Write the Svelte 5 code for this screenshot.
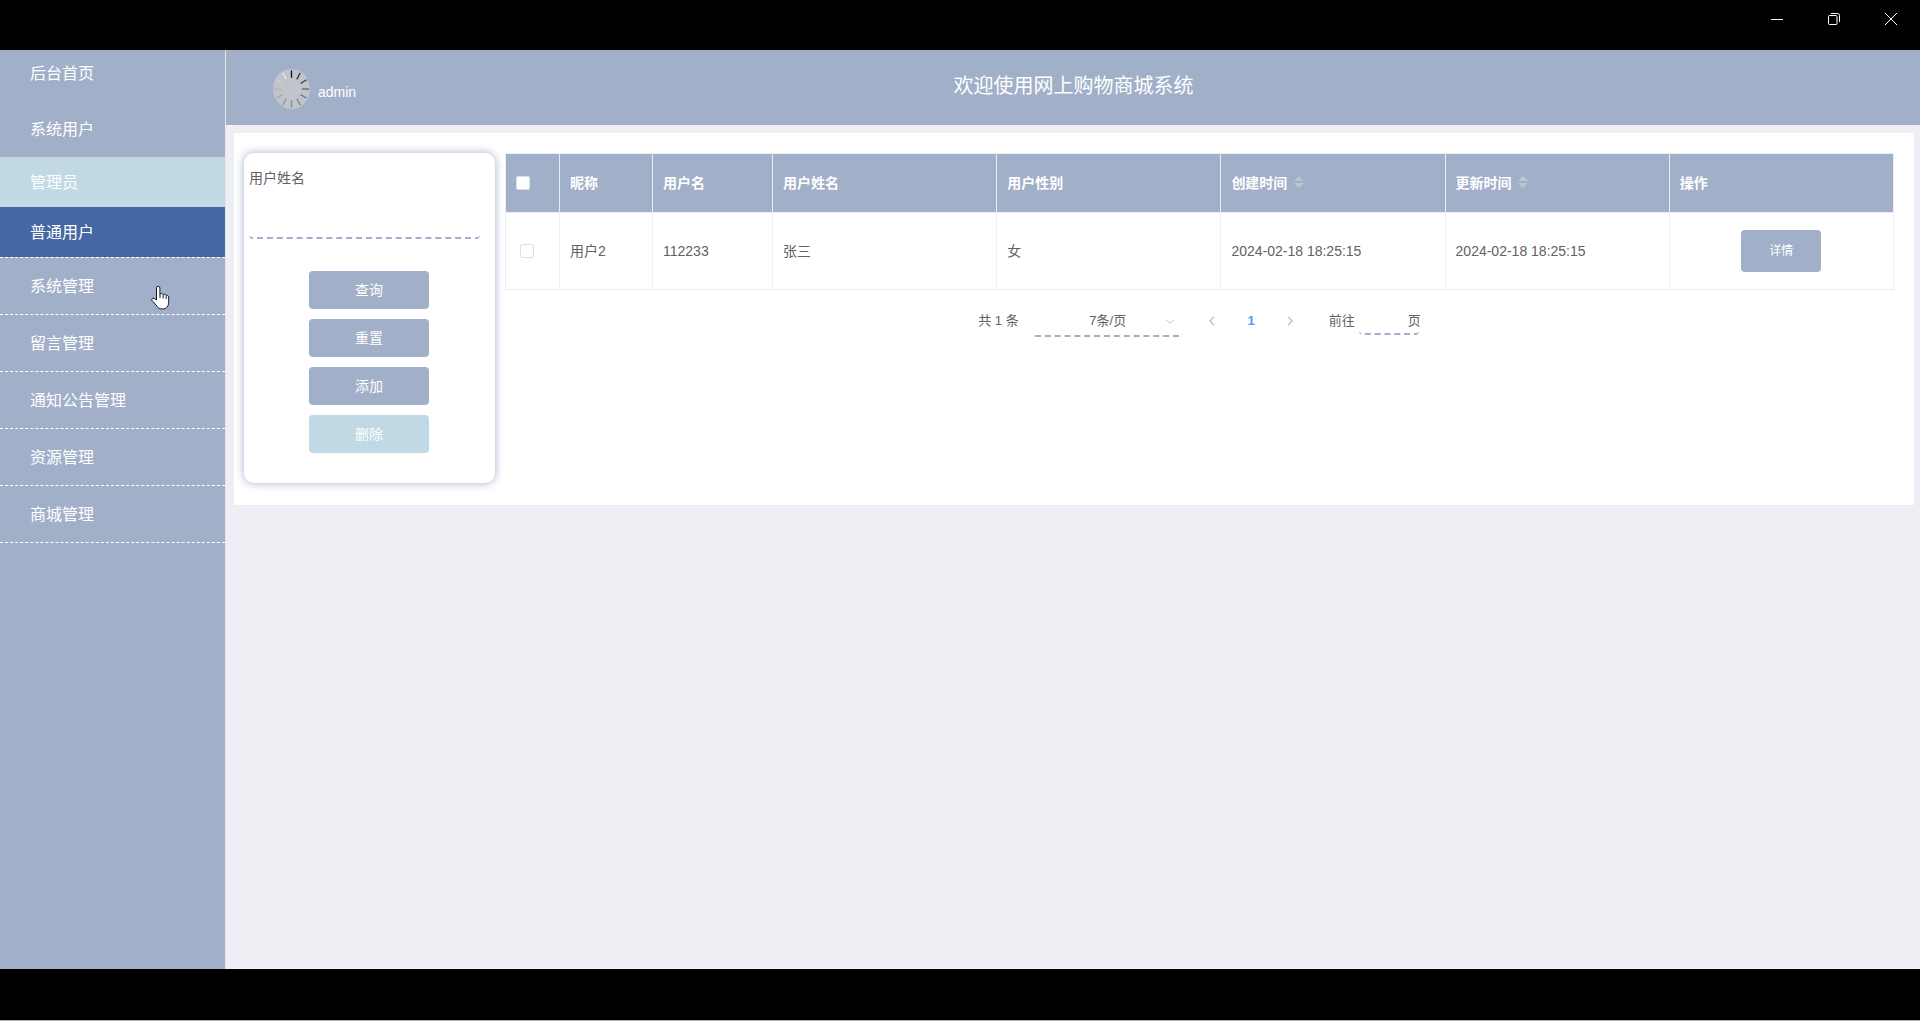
<script lang="ts">
	interface MenuItem {
		label: string;
		kind: 'home' | 'plain' | 'sub' | 'group';
		state?: 'hover' | 'active';
	}

	const menu: MenuItem[] = [
		{ label: '后台首页', kind: 'home' },
		{ label: '系统用户', kind: 'plain' },
		{ label: '管理员', kind: 'sub', state: 'hover' },
		{ label: '普通用户', kind: 'sub', state: 'active' },
		{ label: '系统管理', kind: 'group' },
		{ label: '留言管理', kind: 'group' },
		{ label: '通知公告管理', kind: 'group' },
		{ label: '资源管理', kind: 'group' },
		{ label: '商城管理', kind: 'group' }
	];

	const columns = [
		{ label: '昵称' },
		{ label: '用户名' },
		{ label: '用户姓名' },
		{ label: '用户性别' },
		{ label: '创建时间', sortable: true },
		{ label: '更新时间', sortable: true },
		{ label: '操作' }
	];

	const rows = [
		{
			id: 2,
			nickname: '用户2',
			username: '112233',
			name: '张三',
			gender: '女',
			created: '2024-02-18 18:25:15',
			updated: '2024-02-18 18:25:15'
		}
	];

	// spinner spokes, darkest at twelve o'clock and fading clockwise
	const spokes = [
		'#111', '#333', '#444', '#666', '#777', '#858585',
		'#8a8a8a', '#999', '#a5a5a5', '#b5b5b5', '#d2d2d2', '#e6e6e6'
	];

	let name = $state('');
	let page = $state('');
	let pageSize = $state('7');
	let selected = $state<number[]>([]);

	const allSelected = $derived(selected.length === rows.length);

	function toggleAll() {
		selected = allSelected ? [] : rows.map((r) => r.id);
	}

	function reset() {
		name = '';
	}
</script>

<div class="window">
	<div class="titlebar">
		<button aria-label="最小化">
			<svg width="12" height="12" viewBox="0 0 12 12"><path d="M0 6.5h12" /></svg>
		</button>
		<button aria-label="还原">
			<svg width="12" height="12" viewBox="0 0 12 12">
				<rect x="0.5" y="2.5" width="8.5" height="9" rx="1" />
				<path d="M3 .5h6.5a2 2 0 0 1 2 2V9" />
			</svg>
		</button>
		<button aria-label="关闭">
			<svg width="12" height="12" viewBox="0 0 12 12"><path d="M0 0l12 12M12 0L0 12" /></svg>
		</button>
	</div>

	<div class="app">
		<nav class="sidebar">
			{#each menu as item (item.label)}
				<a href="#{item.label}" class={[item.kind, item.state]}>{item.label}</a>
			{/each}
		</nav>

		<div class="content">
			<header>
				<div class="user">
					<svg class="avatar" width="37" height="40" viewBox="0 0 37 40">
						<ellipse cx="18.5" cy="20" rx="18.5" ry="20" fill="#bfc4cd" />
						{#each spokes as color, i (i)}
							<path
								d="M0 -17.5V-10.5"
								stroke={color}
								stroke-width="1.3"
								transform="translate(18.5 20) scale(1 1.06) rotate({i * 30})"
							/>
						{/each}
					</svg>
					<span>admin</span>
				</div>
				<h1>欢迎使用网上购物商城系统</h1>
			</header>

			<main>
				<form class="search" onsubmit={(e) => e.preventDefault()}>
					<label for="name">用户姓名</label>
					<input id="name" type="text" bind:value={name} />
					<button class="btn">查询</button>
					<button class="btn" type="button" onclick={reset}>重置</button>
					<button class="btn" type="button">添加</button>
					<button class="btn light" type="button" disabled={!selected.length}>删除</button>
				</form>

				<section>
					<table>
						<colgroup>
							<col class="w-check" />
							<col class="w-nick" />
							<col class="w-user" />
							<col span="5" />
						</colgroup>
						<thead>
							<tr>
								<th>
									<input type="checkbox" aria-label="全选" checked={allSelected} onchange={toggleAll} />
								</th>
								{#each columns as col (col.label)}
									<th>
										{col.label}
										{#if col.sortable}
											<svg class="sort" width="10" height="12" viewBox="0 0 10 12">
												<path d="M0 5l5-5 5 5zM0 7l5 5 5-5z" />
											</svg>
										{/if}
									</th>
								{/each}
							</tr>
						</thead>
						<tbody>
							{#each rows as row (row.id)}
								<tr>
									<td class="check">
										<input type="checkbox" aria-label={row.nickname} value={row.id} bind:group={selected} />
									</td>
									<td>{row.nickname}</td>
									<td>{row.username}</td>
									<td>{row.name}</td>
									<td>{row.gender}</td>
									<td>{row.created}</td>
									<td>{row.updated}</td>
									<td class="actions"><button class="btn small">详情</button></td>
								</tr>
							{/each}
						</tbody>
					</table>

					<div class="pagination">
						<span>共 {rows.length} 条</span>
						<div class="size">
							<select aria-label="每页条数" bind:value={pageSize}>
								<option value="7">7条/页</option>
								<option value="10">10条/页</option>
								<option value="20">20条/页</option>
							</select>
							<svg width="10" height="6" viewBox="0 0 10 6"><path d="M1 .5l4 4 4-4" /></svg>
						</div>
						<button class="pager" aria-label="上一页" disabled>
							<svg width="6" height="10" viewBox="0 0 6 10"><path d="M5 .7L1 5l4 4.3" /></svg>
						</button>
						<button class="pager current">1</button>
						<button class="pager" aria-label="下一页" disabled>
							<svg width="6" height="10" viewBox="0 0 6 10"><path d="M1 .7L5 5 1 9.3" /></svg>
						</button>
						<label class="jump">前往 <input type="text" bind:value={page} /> 页</label>
					</div>
				</section>
			</main>
		</div>
	</div>

	<div class="taskbar"></div>

	<svg class="cursor" width="20" height="26" viewBox="0 0 20 26">
		<path
			d="M6.5 15V3a1.7 1.7 0 0 1 3.4 0v6.2c.4-1.1 2.9-1 3.2.5.6-.8 2.8-.6 3 .9.9-.7 2.6-.2 2.6 1.5V17c0 4-2 7-6.2 7-3.5 0-5-1.5-6.5-4L2 15.5c-1-1.5.8-3 2.2-2z"
		/>
		<path class="fold" d="M10 9v4M13.2 10v3.5M16.2 11v3" />
	</svg>
</div>

<style>
	:global(body) {
		margin: 0;
		background: #000;
	}

	.window {
		position: relative;
		display: flex;
		flex-direction: column;
		min-height: 100vh;
		font: 14px/20px 'Liberation Sans', 'Noto Sans CJK SC', sans-serif;
		color: #606266;
	}

	.window :global(*) {
		box-sizing: border-box;
	}

	button,
	input,
	select {
		font: inherit;
		color: inherit;
		margin: 0;
	}

	button {
		padding: 0;
		border: 0;
		background: none;
		cursor: pointer;
	}

	svg {
		fill: none;
	}

	.titlebar {
		display: flex;
		justify-content: flex-end;
		height: 50px;
		padding-right: 1px;
		background: #000;
	}

	.titlebar button {
		display: grid;
		place-items: center;
		width: 57px;
		height: 38px;
	}

	.titlebar svg {
		stroke: #fff;
	}

	.app {
		display: flex;
		flex: 1;
		background: #eeeef4;
	}

	.sidebar {
		flex: none;
		width: 226px;
		background: #a2afc9;
		border-right: 1px solid #e6e6e6;
	}

	.sidebar a {
		display: block;
		padding: 2px 0 0 30px;
		font-size: 16px;
		line-height: 54px;
		color: #fff;
		text-decoration: none;
	}

	.sidebar .home {
		padding-bottom: 5px;
		line-height: 44px;
	}

	.sidebar .sub {
		line-height: 48px;
	}

	.sidebar .hover {
		background: #c0d9e4;
	}

	.sidebar .active {
		background: #4468a1;
	}

	.sidebar .group {
		border-bottom: 1px dashed #fff;
	}

	.sidebar .active + .group {
		border-top: 1px dashed #fff;
	}

	.content {
		flex: 1;
		min-width: 0;
	}

	header {
		display: grid;
		grid-template-columns: 1fr auto 1fr;
		height: 75px;
		padding: 2px 46px 0 47px;
		background: #a2afc9;
		color: #fff;
	}

	.user {
		display: flex;
		align-items: center;
		gap: 8px;
	}

	.user span {
		padding-top: 6px;
	}

	h1 {
		margin: 0;
		font-size: 20px;
		font-weight: 400;
		line-height: 68px;
	}

	main {
		display: flex;
		align-items: flex-start;
		gap: 10px;
		margin: 8px 6px 0 8px;
		padding: 20px 20px 22px 10px;
		background: #fff;
	}

	.search {
		display: flex;
		flex: none;
		flex-direction: column;
		align-items: center;
		gap: 10px;
		width: 251px;
		padding: 5px 6px 30px 5px;
		border-radius: 10px;
		box-shadow: 0 0 10px #a2afc9;
	}

	.search label {
		align-self: flex-start;
		line-height: 40px;
	}

	.search input {
		align-self: flex-start;
		width: 231px;
		height: 36px;
		margin: -5px 0 22px;
		padding: 0 15px;
		border: 0 dashed #a2afc9;
		border-bottom-width: 2px;
		border-radius: 4px;
		background: none;
		outline: 0;
	}

	.btn {
		width: 120px;
		height: 38px;
		border-radius: 4px;
		background: #a2afc9;
		color: #fff;
	}

	.btn.light {
		background: #c0d9e4;
	}

	.btn.small {
		width: 80px;
		height: 42px;
		font-size: 12px;
	}

	section {
		flex: 1;
		min-width: 0;
	}

	table {
		width: 100%;
		table-layout: fixed;
		border-spacing: 0;
		border: solid #ebeef5;
		border-width: 1px 0 0 1px;
	}

	.w-check {
		width: 54px;
	}

	.w-nick {
		width: 93px;
	}

	.w-user {
		width: 120px;
	}

	th,
	td {
		padding: 0 10px;
		border: solid #ebeef5;
		border-width: 0 1px 1px 0;
		text-align: left;
	}

	th {
		height: 59px;
		background: #a2afc9;
		color: #fff;
	}

	td {
		height: 77px;
	}

	.check {
		padding-left: 14px;
	}

	.actions {
		text-align: center;
	}

	.sort {
		margin-left: 3px;
		fill: #c0c4cc;
	}

	input[type='checkbox'] {
		display: block;
		appearance: none;
		width: 14px;
		height: 14px;
		border: 1px solid #dcdfe6;
		border-radius: 2px;
		background: #fff;
	}

	input[type='checkbox']:checked {
		background: #409eff;
	}

	.pagination {
		display: flex;
		justify-content: center;
		align-items: center;
		height: 32px;
		margin-top: 15px;
		font-size: 13px;
	}

	.size {
		display: flex;
		align-items: center;
		width: 150px;
		margin: 0 10px 0 14px;
	}

	.size select {
		width: 150px;
		height: 32px;
		padding: 2px 22px 0;
		border: 0 dashed #a2afc9;
		border-bottom-width: 2px;
		border-radius: 4px;
		appearance: none;
		background: none;
		text-align: center;
		text-align-last: center;
	}

	.size svg {
		flex: none;
		margin: 2px 0 0 -18px;
		stroke: #c0c4cc;
		pointer-events: none;
	}

	.pager {
		display: grid;
		place-items: center;
		width: 39px;
		height: 28px;
	}

	.pager svg {
		stroke: #c0c4cc;
		stroke-width: 1.5;
	}

	.current {
		color: #409eff;
		font-weight: 700;
	}

	.jump {
		display: flex;
		align-items: center;
		margin-left: 19px;
	}

	/* the field runs a little way under the unit after it */
	.jump input {
		width: 60px;
		height: 28px;
		margin: 0 -11px 0 4px;
		padding: 0 3px;
		border: 0 dashed #a2afc9;
		border-bottom-width: 2px;
		border-radius: 4px;
		background: none;
		text-align: center;
		outline: 0;
	}

	.taskbar {
		height: 52px;
		background: #000;
		border-bottom: 1px solid #b4b4aa;
	}

	.cursor {
		position: absolute;
		top: 285px;
		left: 150px;
		fill: #fff;
		stroke: #111a2e;
		pointer-events: none;
	}

	.fold {
		fill: none;
	}
</style>
